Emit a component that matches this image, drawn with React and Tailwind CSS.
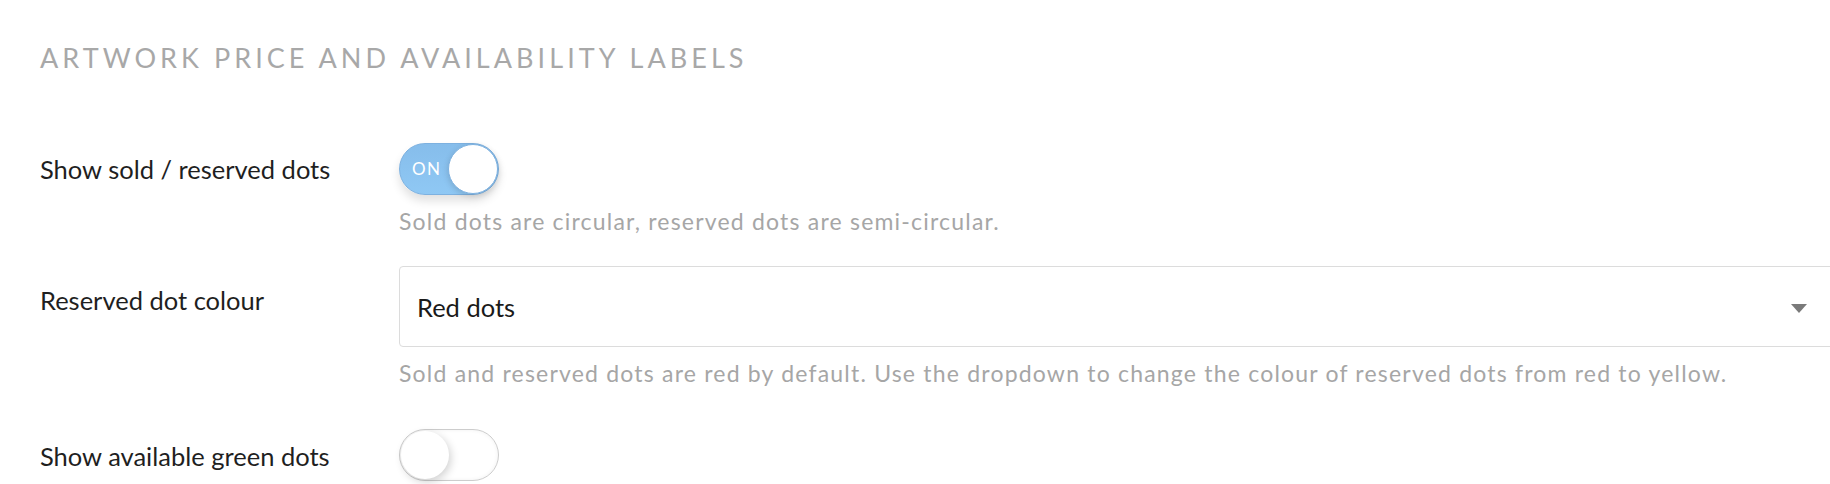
export default function App() {
  const font = { fontFamily: "Lato, 'Open Sans', sans-serif" };
  return (
    <div className="h-[484px] w-[1830px] overflow-hidden bg-white" style={font}>
      <div className="pl-[40px] pt-[42px]">
        <h2 className="text-[27px] leading-[32px] tracking-[0.15em] text-[#a8a8a8] font-normal">
          ARTWORK PRICE AND AVAILABILITY LABELS
        </h2>

        {/* Row 1 */}
        <div className="mt-[69px] flex">
          <div className="w-[359px] shrink-0 pt-[12px] text-[25.5px] leading-[28px] text-[#1f1f1f]">
            Show sold / reserved dots
          </div>
          <div className="flex flex-col">
            <div className="relative h-[52px] w-[100px] rounded-full border border-[#7db1e0] bg-gradient-to-b from-[#86bdeb] to-[#8fc8f4] shadow-[0_6px_10px_rgba(0,0,0,0.12)]">
              <span className="absolute left-[12px] top-[13px] text-[17px] leading-[24px] tracking-[0.08em] text-white">
                ON
              </span>
              <span className="absolute right-[0px] top-[0px] h-[50px] w-[50px] rounded-full border border-[#7db1e0] bg-white shadow-[0_2px_6px_rgba(0,0,0,0.15)]" />
            </div>
            <div className="mt-[12px] text-[23px] leading-[28px] tracking-[1.2px] text-[#a6a6a6]">
              Sold dots are circular, reserved dots are semi-circular.
            </div>
          </div>
        </div>

        {/* Row 2 */}
        <div className="mt-[31px] flex">
          <div className="w-[359px] shrink-0 pt-[20px] text-[25.5px] leading-[28px] text-[#1f1f1f]">
            Reserved dot colour
          </div>
          <div className="flex flex-col">
            <div className="relative flex h-[81px] w-[1440px] items-center rounded-[4px] border border-[#dcdcdc] bg-white pl-[17px]">
              <span className="text-[25.5px] leading-[28px] text-[#1a1a1a]">Red dots</span>
              <svg
                className="absolute right-[31px] top-[37px]"
                width="16"
                height="9"
                viewBox="0 0 16 9"
              >
                <path d="M0 0 H16 L8 9 Z" fill="#7a7a7a" />
              </svg>
            </div>
            <div className="mt-[12px] text-[23px] leading-[28px] tracking-[1.2px] text-[#a6a6a6]">
              Sold and reserved dots are red by default. Use the dropdown to change the colour of
              reserved dots from red to yellow.
            </div>
          </div>
        </div>

        {/* Row 3 */}
        <div className="mt-[42px] flex">
          <div className="w-[359px] shrink-0 pt-[13px] text-[25.5px] leading-[28px] text-[#1f1f1f]">
            Show available green dots
          </div>
          <div className="relative h-[52px] w-[100px] rounded-full border-[1.5px] border-[#cdcdcd] bg-white shadow-[inset_0_0_4px_rgba(0,0,0,0.06)]">
            <span className="absolute left-[1px] top-[1px] h-[48px] w-[48px] rounded-full bg-white shadow-[2px_3px_8px_rgba(0,0,0,0.18)]" />
          </div>
        </div>
      </div>
    </div>
  );
}
